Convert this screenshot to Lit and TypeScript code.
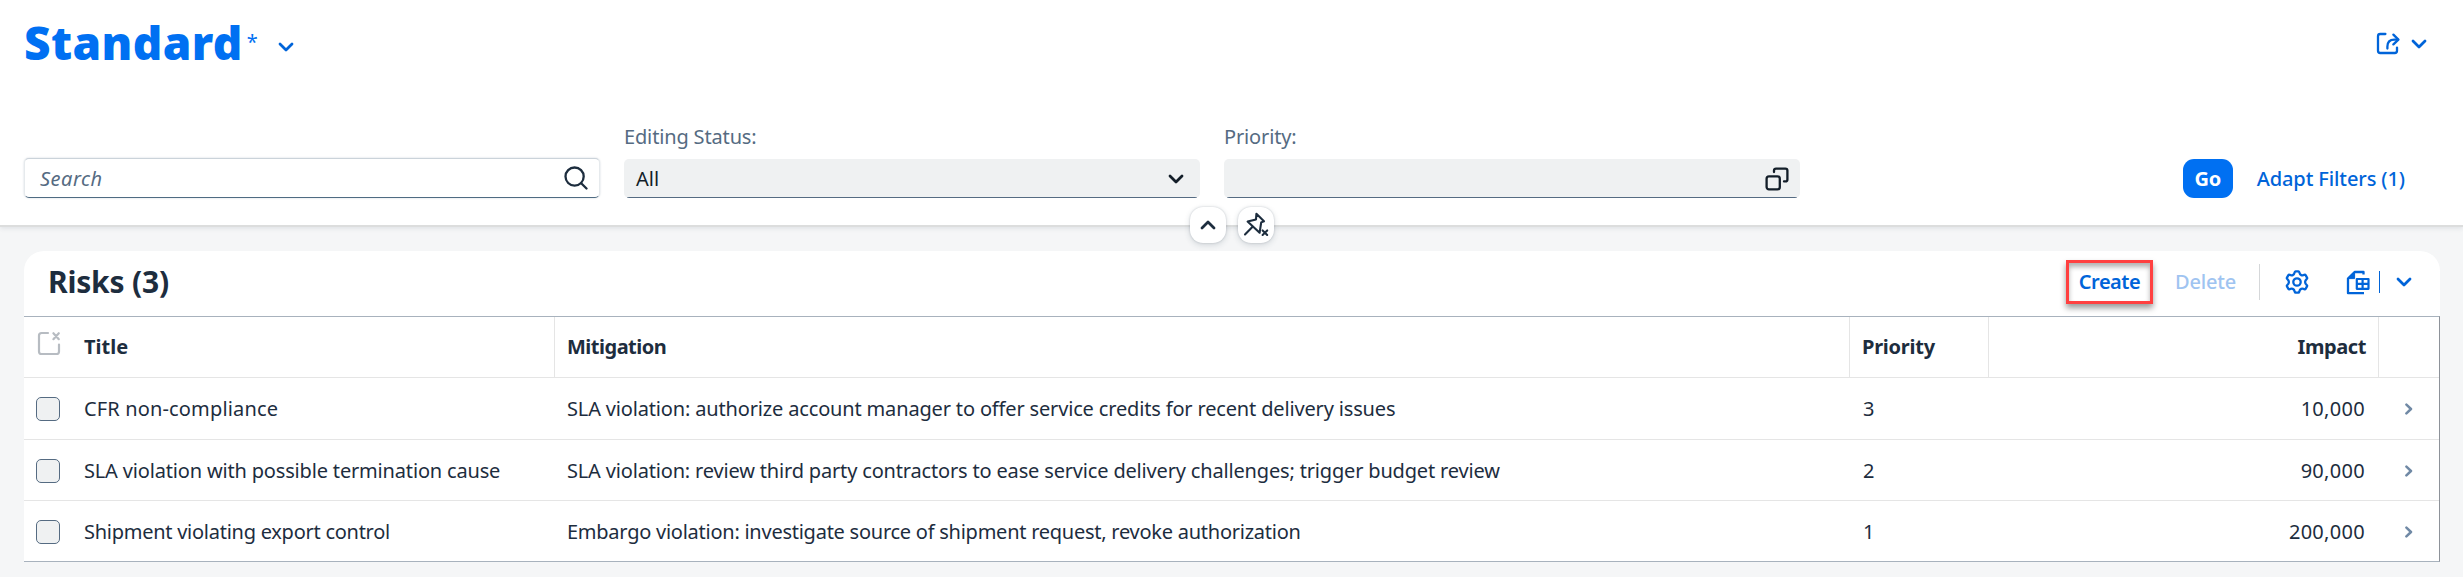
import { LitElement, html, css, svg, nothing } from "lit";
import { customElement } from "lit/decorators.js";
import { styleMap } from "lit/directives/style-map.js";

/** Row of the risks table; each text carries its letter tracking in px. */
interface Risk {
  title: [string, number];
  mitigation: [string, number];
  priority: string;
  impact: string;
}

const RISKS: Risk[] = [
  {
    title: ["CFR non-compliance", 0.15],
    mitigation: ["SLA violation: authorize account manager to offer service credits for recent delivery issues", -0.16],
    priority: "3",
    impact: "10,000",
  },
  {
    title: ["SLA violation with possible termination cause", -0.17],
    mitigation: ["SLA violation: review third party contractors to ease service delivery challenges; trigger budget review", -0.17],
    priority: "2",
    impact: "90,000",
  },
  {
    title: ["Shipment violating export control", -0.26],
    mitigation: ["Embargo violation: investigate source of shipment request, revoke authorization", -0.25],
    priority: "1",
    impact: "200,000",
  },
];

const icon = (w: number, h: number, body: unknown) => html`
  <svg width=${w} height=${h} viewBox="0 0 ${w} ${h}" fill="none" stroke="currentColor"
    stroke-width="2.3" stroke-linecap="round" stroke-linejoin="round">${body}</svg>`;

const chevronDown = () => icon(16, 10, svg`<path d="M2 2l6 6 6-6" stroke-width="2.8"/>`);
const chevronUp = () => icon(16, 10, svg`<path d="M2 8l6-6 6 6" stroke-width="2.8"/>`);
const chevronRight = () => icon(10, 12, svg`<path d="M2.4 1.6L7 6l-4.600 4.400" stroke-width="2.500"/>`);
const magnifier = () => icon(24, 24, svg`<circle cx="10.6" cy="10.6" r="9.1"/><path d="M17.2 17.2l5.3 5.3"/>`);
const valueHelp = () => icon(24, 24, svg`
  <rect x="1.6" y="9.4" width="13.2" height="13" rx="2.4"/>
  <path d="M9 5V3.6q0-2 2-2h9.4q2 0 2 2v8.8q0 2-2 2H19"/>`);
const share = () => icon(24, 24, svg`
  <path d="M9.400 2H4.200Q2 2 2 4.200v14.600Q2 21 4.200 21h14.600q2.200 0 2.200-2.200V15.600"/>
  <path d="M11.400 16.600v-2q0-7 7-7h3.600"/><path d="M17.400 2.600l5 5-5 4.800"/>`);
const gear = () => icon(24, 26, svg`
  <circle cx="12" cy="13" r="3.700"/>
  <path d="M10.600 2.300h2.800q.6 0 .8.800.5 2.400 2 3t3.200-.3q.8-.3 1.200.3l1.400 2.500q.4.700-.2 1.200-1.700 1.500-1.700 3.200t1.700 3.200q.6.500.2 1.200l-1.400 2.500q-.4.600-1.200.3-1.700-.9-3.200-.3t-2 3q-.2.800-.8.800h-2.800q-.6 0-.8-.8-.5-2.400-2-3t-3.200.3q-.8.300-1.200-.3L2 17.400q-.4-.7.200-1.200 1.700-1.500 1.700-3.200T2.200 9.800Q1.600 9.300 2 8.600l1.400-2.500q.4-.6 1.200-.3 1.700.9 3.200.3t2-3q.2-.8.800-.8z"/>`);
const exportSheet = () => icon(24, 25, svg`
  <path d="M17.500 4.500V2H8.600L2 8.600V23.200h16" stroke-linecap="butt"/>
  <path d="M8.600 2v6.600H2z" fill="currentColor" stroke-width="1"/>
  <path d="M10.800 9h11.700v9.800H10.800zM16.600 9v9.800M10.800 13.900h11.700" stroke-width="2.200"/>`);
const unpin = () => icon(26, 26, svg`
  <path d="M13.400 1.800l7.600 7.400-2.800 1.200-1.600 10.400L4.600 9.600 13 7.400z" stroke-width="2.100"/>
  <path d="M9.600 14.800L2 22.400" stroke-width="2.100"/>
  <path d="M19.600 18.400l4.600 4.600m0-4.600l-4.600 4.600" stroke-width="2.100"/>`);
const clearSelection = () => icon(24, 26, svg`
  <path d="M11 2H4.600Q2 2 2 4.600v15.800Q2 23 4.600 23h14.800q2.600 0 2.600-2.600V13.500" stroke-width="2.200"/>
  <path d="M16.400 2.200l5.400 6m0-6l-5.400 6" stroke-width="2.200"/>`);

@customElement("app-root")
export class AppRoot extends LitElement {
  static styles = css`
    :host {
      display: block;
      height: 577px;
      background: #f5f6f7;
      color: #1d2d3e;
      font: 400 20px/39px "Noto Sans", "Open Sans", sans-serif;
      white-space: nowrap;
      overflow: hidden;
    }
    * { box-sizing: border-box; }
    svg { display: block; flex: none; }

    .head {
      position: relative;
      height: 227px;
      padding: 0 24px;
      background: #fff;
      border-bottom: 2px solid #dcdddd;
      box-shadow: 0 1px 5px rgba(34, 53, 72, 0.12);
    }
    .variant { display: flex; align-items: center; height: 84px; color: #0070f2; }
    .variant h1 { margin: 0; font-size: 46px; font-weight: 900; line-height: 84px; letter-spacing: 0.4px; }
    .dirty { margin-left: 4px; font-size: 20px; line-height: 84px; }
    .variant .toggle { margin: 9px 0 0 20px; color: #0064d9; }
    .actions { display: flex; align-items: center; gap: 11px; margin: 3px 12px 0 auto; color: #0064d9; }

    .filters { display: flex; align-items: flex-end; gap: 24px; margin-top: 36px; height: 78px; }
    .field { width: 576px; color: #556b82; }
    .field label { display: block; height: 39px; line-height: 34px; letter-spacing: -0.15px; }
    .box {
      display: flex;
      align-items: center;
      justify-content: space-between;
      height: 39px;
      padding: 0 16px 0 12px;
      color: #131e29;
      border-radius: 5px;
      background: linear-gradient(#556b82, #556b82) 50% 100% / calc(100% - 6px) 1px no-repeat #eff1f2;
    }
    .box.help { padding-right: 11px; }
    .search {
      height: 40px;
      padding: 0 11px 0 15px;
      color: #1d2d3e;
      background: #fff;
      border: 1px solid;
      border-color: #cbd3da #e6eaed #4f6b82;
      box-shadow: 0 0 2px rgba(85, 107, 130, 0.3);
    }
    .search i { color: #556b82; letter-spacing: 0.5px; }
    .go {
      width: 50px;
      margin-left: auto;
      color: #fff;
      background: #0070f2;
      border-radius: 11px;
      font-weight: 700;
      text-align: center;
      letter-spacing: -0.4px;
    }
    .adapt { margin-right: 34px; color: #0064d9; font-weight: 500; letter-spacing: -0.1px; }

    .handles { position: absolute; left: 1190px; top: 207px; display: flex; gap: 12px; }
    .handle {
      display: grid;
      place-items: center;
      width: 36px;
      height: 36px;
      background: #fff;
      border-radius: 13px;
      box-shadow: 0 0 2px rgba(34, 53, 72, 0.25), 0 2px 6px rgba(34, 53, 72, 0.16);
    }

    .card { margin: 24px 23px 0 24px; background: #fff; border-radius: 20px 20px 0 0; }
    .toolbar { display: flex; align-items: center; height: 65px; padding: 0 28px 4px 24px; color: #0064d9; font-weight: 500; }
    .toolbar h2 { margin: 0 auto 0 0; color: #1d2d3e; font-size: 30px; font-weight: 700; letter-spacing: -0.2px; }
    .create {
      width: 87px;
      height: 44px;
      line-height: 38px;
      text-align: center;
      font-weight: 600;
      letter-spacing: -0.5px;
      border: 3px solid #ff4040;
      box-shadow: 0 4px 6px rgba(0, 0, 0, 0.4), inset 0 4px 5px rgba(0, 0, 0, 0.3);
    }
    .delete { width: 61px; margin-left: 22px; color: #9fc4f1; letter-spacing: -0.2px; }
    .rule { width: 1px; height: 36px; margin: 0 25px 0 23px; background: #d5d7d9; }
    .sheet { margin: 2px 9px 0 37px; }
    .bar { width: 1px; height: 22px; margin-right: 16px; background: #0064d9; }

    .table { border-top: 1px solid #a8b2bd; border-bottom: 1px solid #a8b2bd; border-right: 1px solid #8d9299; }
    .row { display: grid; grid-template-columns: 47px 484px 1295px 139px 390px 1fr; height: 61px; line-height: 61px; }
    .row + .row { border-top: 1px solid #e5e5e5; }
    .row > * { padding: 0 12px; }
    .row > :nth-child(2) { padding-left: 13px; }
    .row.first { height: 62px; }
    .row > :first-child { padding: 0 0 0 12px; display: flex; align-items: center; }
    .row > :last-child { display: flex; align-items: center; padding-left: 25px; color: #7089a5; }
    .columns { font-weight: 700; height: 60px; line-height: 60px; }
    .columns > :nth-child(n + 2):nth-child(-n + 5) { border-right: 1px solid #e5e5e5; }
    .columns > :first-child { color: #b7bcc2; padding: 0 0 7px 13px; }
    .columns .mitigation { letter-spacing: -0.5px; }
    .columns .narrow { letter-spacing: -0.25px; }
    .row > .number { text-align: right; padding-right: 14px; letter-spacing: 0.3px; }
    .columns > .number { letter-spacing: -0.4px; padding-right: 12px; }
    .row > .count { padding-left: 13px; }
    .check { width: 24px; height: 24px; border: 1px solid #556b82; border-radius: 5px; background: #eff1f2; }
  `;

  private text([value, tracking]: [string, number]) {
    return html`<div style=${styleMap({ letterSpacing: `${tracking}px` })}>${value}</div>`;
  }

  render() {
    return html`
      <header class="head">
        <div class="variant">
          <h1>Standard</h1><span class="dirty">*</span>
          <span class="toggle">${chevronDown()}</span>
          <div class="actions">${share()}${chevronDown()}</div>
        </div>
        <div class="filters">
          <div class="field"><div class="box search"><i>Search</i>${magnifier()}</div></div>
          <div class="field"><label>Editing Status:</label><div class="box">All${chevronDown()}</div></div>
          <div class="field"><label>Priority:</label><div class="box help"><span></span>${valueHelp()}</div></div>
          <div class="go">Go</div>
          <div class="adapt">Adapt Filters (1)</div>
        </div>
        <div class="handles">
          <span class="handle">${chevronUp()}</span>
          <span class="handle">${unpin()}</span>
        </div>
      </header>
      <section class="card">
        <div class="toolbar">
          <h2>Risks (3)</h2>
          <span class="create">Create</span>
          <span class="delete">Delete</span>
          <span class="rule"></span>
          ${gear()}
          <span class="sheet">${exportSheet()}</span>
          <span class="bar"></span>
          ${chevronDown()}
        </div>
        <div class="table">
          <div class="row columns">
            <div>${clearSelection()}</div>
            <div>Title</div>
            <div class="mitigation">Mitigation</div>
            <div class="narrow">Priority</div>
            <div class="number">Impact</div>
            <div>${nothing}</div>
          </div>
          ${RISKS.map((risk, i) => html`
            <div class="row ${i === 0 ? "first" : ""}">
              <div><span class="check"></span></div>
              ${this.text(risk.title)}
              ${this.text(risk.mitigation)}
              <div class="count">${risk.priority}</div>
              <div class="number">${risk.impact}</div>
              <div>${chevronRight()}</div>
            </div>`)}
        </div>
      </section>`;
  }
}
